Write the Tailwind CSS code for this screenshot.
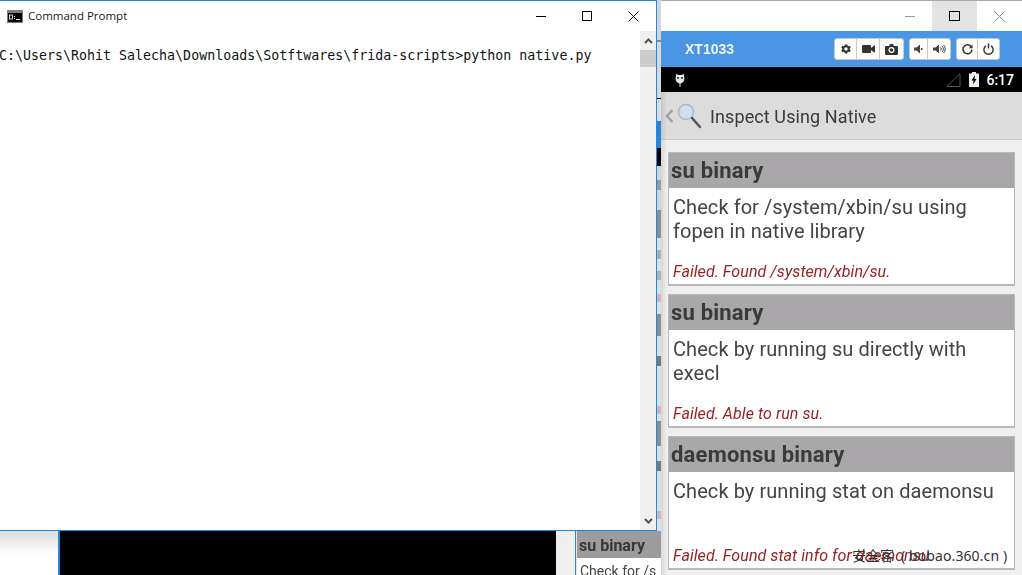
<!DOCTYPE html>
<html lang="en">
<head>
  <meta charset="UTF-8" />
  <title>Command Prompt</title>
  <script src="https://cdn.jsdelivr.net/npm/@tailwindcss/browser@4"></script>
</head>
<body class="bg-white overflow-hidden">
  <div class="relative w-[1022px] h-[575px] overflow-hidden font-['Roboto',sans-serif]">

    <!-- strip of the back window between cmd and emulator -->
    <div class="absolute left-[657px] top-0 w-[4px] h-[531px] flex flex-col bg-[#d6d6d6] blur-[0.3px]">
      <div class="h-[40px] bg-[#d4d4d4]"></div>
      <div class="h-[2px] bg-[#8a8a8a]"></div>
      <div class="h-[56px] bg-[#d8d8d8]"></div>
      <div class="h-[1px] bg-black"></div>
      <div class="h-[22px] bg-[#dcdcdc]"></div>
      <div class="h-[27px] bg-[#2f80d0]"></div>
      <div class="h-[18px] bg-black"></div>
      <div class="h-[14px] bg-[#d4d4d4]"></div>
      <div class="h-[10px] bg-[#9a9a9a]"></div>
      <div class="h-[20px] bg-[#d4d4d4]"></div>
      <div class="h-[28px] bg-[#8f8d8f]"></div>
      <div class="h-[12px] bg-[#dedede]"></div>
      <div class="h-[9px] bg-[#b0b0b0]"></div>
      <div class="h-[12px] bg-[#dedede]"></div>
      <div class="h-[9px] bg-[#b0b0b0]"></div>
      <div class="h-[14px] bg-[#dedede]"></div>
      <div class="h-[8px] bg-[#d8b4b4]"></div>
      <div class="h-[12px] bg-[#dedede]"></div>
      <div class="h-[22px] bg-[#8f8d8f]"></div>
      <div class="h-[20px] bg-[#dedede]"></div>
      <div class="h-[10px] bg-[#777]"></div>
      <div class="h-[40px] bg-[#dedede]"></div>
      <div class="h-[8px] bg-[#d8b4b4]"></div>
      <div class="h-[7px] bg-[#dedede]"></div>
      <div class="h-[25px] bg-[#8f8d8f]"></div>
      <div class="h-[15px] bg-[#dedede]"></div>
      <div class="h-[10px] bg-[#777]"></div>
      <div class="h-[40px] bg-[#dedede]"></div>
      <div class="h-[8px] bg-[#d8b4b4]"></div>
      <div class="flex-1 bg-[#dedede]"></div>
    </div>

    <!-- window behind: black pane and the bit of the app peeking out -->
    <div class="absolute left-[58px] top-[531px] w-[2px] h-[44px] bg-[#1e88e5]"></div>
    <div class="absolute left-[60px] top-[531px] w-[496px] h-[44px] bg-black"></div>
    <div class="absolute left-[556px] top-[531px] w-[20px] h-[44px] bg-[#efefef]"></div>
    <div class="absolute left-[575px] top-[531px] w-[1px] h-[44px] bg-[#2a8ae0]"></div>
    <div class="absolute left-[576px] top-[531px] w-[85px] h-[44px] bg-[#e4e4e4] flex flex-col">
      <div class="ml-px h-[27px] bg-[#9d9b9d] pl-[2px] text-[16px] leading-[30px] font-bold text-[#383838] blur-[0.4px] whitespace-nowrap overflow-hidden">su binary</div>
      <div class="ml-px h-[17px] bg-white pl-[3px] text-[14px] leading-[27px] text-[#444] blur-[0.4px] whitespace-nowrap overflow-hidden">Check for /s</div>
    </div>

    <!-- emulator window -->
    <div class="absolute left-[661px] top-0 w-[361px] h-[575px] flex flex-col bg-[#efefef] border-t border-[#a8a8a8]">
      <div class="h-[30px] bg-white flex justify-end shrink-0">
        <div class="w-[45px] flex items-center justify-center">
          <div class="w-[10px] h-px bg-[#9a9a9a]"></div>
        </div>
        <div class="w-[45px] flex items-center justify-center bg-[#e3e3e3]">
          <div class="w-[11px] h-[10px] border border-black"></div>
        </div>
        <div class="w-[45px] flex items-center justify-center">
          <svg width="11" height="11" viewBox="0 0 11 11" stroke="#8a8a8a" fill="none"><path d="M.5.5l10 10M10.5.5l-10 10"/></svg>
        </div>
      </div>

      <!-- toolbar -->
      <div class="h-[36px] bg-[#4a95e4] flex items-center shrink-0 pl-[24px] font-['Liberation_Sans',sans-serif]">
        <span class="w-[149px] text-white text-[14px] font-bold opacity-90">XT1033</span>
        <div class="flex h-[22px] bg-white rounded-[3px] border border-[#c8c8c8] divide-x divide-[#c8c8c8]">
          <div class="w-[22px] flex items-center justify-center">
            <svg width="12" height="12" viewBox="0 0 24 24" fill="#333"><path d="M19.4 13a7.500 7.500 0 0 0 0-2l2.200-1.700-2.200-3.700-2.600 1a7.500 7.500 0 0 0-1.700-1L14.500 2.800h-5L9 5.600a7.500 7.500 0 0 0-1.700 1l-2.600-1-2.200 3.700L4.700 11a7.500 7.500 0 0 0 0 2l-2.200 1.700 2.200 3.700 2.600-1a7.500 7.500 0 0 0 1.700 1l.5 2.800h5l.6-2.800a7.500 7.500 0 0 0 1.700-1l2.600 1 2.200-3.700zM12 15.500a3.500 3.500 0 1 1 0-7 3.500 3.500 0 0 1 0 7z"/></svg>
          </div>
          <div class="w-[23px] flex items-center justify-center">
            <svg width="13" height="10" viewBox="0 0 13 10" fill="#333"><rect x="0" y="1" width="9" height="8" rx="1"/><path d="M9 4l4-3v8L9 6z"/></svg>
          </div>
          <div class="w-[23px] flex items-center justify-center">
            <svg width="13" height="11" viewBox="0 0 13 11" fill="#333"><path fill-rule="evenodd" d="M1 2h3l1-2h3l1 2h3a1 1 0 0 1 1 1v7a1 1 0 0 1-1 1H1a1 1 0 0 1-1-1V3a1 1 0 0 1 1-1zm5.500 7a3 3 0 1 0 0-6 3 3 0 0 0 0 6zm0-1.300a1.700 1.700 0 1 1 0-3.400 1.700 1.700 0 0 1 0 3.400z"/></svg>
          </div>
        </div>
        <div class="ml-[5px] flex h-[22px] bg-white rounded-[3px] border border-[#c8c8c8] divide-x divide-[#c8c8c8]">
          <div class="w-[18px] flex items-center justify-center">
            <svg width="9" height="10" viewBox="0 0 9 10" fill="#444"><path d="M0 3.500h2.500L6 .5v9L2.500 6.500H0z"/><path d="M7 4h1.500v2H7z"/></svg>
          </div>
          <div class="w-[22px] flex items-center justify-center">
            <svg width="13" height="10" viewBox="0 0 13 10" fill="#444"><path d="M0 3.500h2.500L6 .5v9L2.500 6.500H0z"/><path d="M7.500 3.500a2 2 0 0 1 0 3M9 2a4 4 0 0 1 0 6M10.500 .8a6 6 0 0 1 0 8.400" fill="none" stroke="#444"/></svg>
          </div>
        </div>
        <div class="ml-[5px] flex h-[22px] bg-white rounded-[3px] border border-[#c8c8c8] divide-x divide-[#c8c8c8]">
          <div class="w-[21px] flex items-center justify-center">
            <svg width="11" height="11" viewBox="0 0 11 11" fill="none" stroke="#333" stroke-width="1.500"><path d="M9.500 3.200A4.500 4.500 0 1 0 10 5.500"/><path d="M10.500 .5v3.700H6.800z" fill="#333" stroke="none"/></svg>
          </div>
          <div class="w-[21px] flex items-center justify-center">
            <svg width="11" height="12" viewBox="0 0 11 12" fill="none" stroke="#333" stroke-width="1.400"><path d="M3 2.800a4.600 4.600 0 1 0 5 0M5.500 .5v5"/></svg>
          </div>
        </div>
      </div>

      <!-- android status bar -->
      <div class="h-[25px] bg-black flex items-center shrink-0 pl-[13px] pr-[8px] text-white">
        <svg width="12" height="16" viewBox="0 0 12 16" fill="#e8e8e8"><path d="M2.500 1.500L4 3h4l1.500-1.500L10 4c1.200 3.500-.5 7-3.500 7.500V15h-1v-3.500C2.500 11 .8 7.500 2 4z"/><circle cx="4" cy="6" r="1" fill="#222"/><circle cx="8" cy="6" r="1" fill="#222"/></svg>
        <div class="flex-1"></div>
        <svg width="15" height="14" viewBox="0 0 15 14" fill="none" stroke="#555"><path d="M14 .8V13.500H.8z"/></svg>
        <svg class="ml-[8px]" width="10" height="15" viewBox="0 0 10 15" fill="#eee"><path fill-rule="evenodd" d="M3 0h4v1.500h3V15H0V1.500h3zM6 3L2.500 8.500h2L4 12.500l3.500-5.500h-2z"/></svg>
        <span class="ml-[7px] text-[14px] font-medium leading-none">6:17</span>
      </div>

      <!-- action bar -->
      <div class="h-[48px] bg-[#dcdcdc] border-b border-[#cfcfcf] flex items-center shrink-0 pl-[4px] blur-[0.3px]">
        <svg width="9" height="14" viewBox="0 0 9 14" fill="none" stroke="#a3a3a3" stroke-width="2.500"><path d="M7.500 1L2 7l5.500 6"/></svg>
        <svg class="ml-[2px]" width="26" height="28" viewBox="0 0 26 28" fill="none"><circle cx="10" cy="10" r="7.500" fill="#cfe0ec" stroke="#a9bcc9" stroke-width="1.500"/><path d="M16 16l8 9" stroke="#555" stroke-width="2.500" stroke-linecap="round"/></svg>
        <span class="ml-[8px] mt-[2px] text-[18px] text-[#3a3a3a] tracking-[0.1px]">Inspect Using Native</span>
      </div>

      <!-- cards -->
      <div class="px-[7px] pt-[12px] flex flex-col gap-[8px] blur-[0.3px]">
        <div class="h-[134px] bg-white border border-[#b8b8b8] border-b-2 flex flex-col">
          <div class="h-[35px] bg-[#a9a7a9] pl-[2px] text-[22px] tracking-[0.2px] leading-[35px] font-bold text-[#3a3a3a]">su binary</div>
          <div class="flex-1 px-[4px] pt-[7px] text-[20px] leading-[24px] text-[#444] tracking-[0.07px]">Check for /system/xbin/su using<br />fopen in native library</div>
          <div class="px-[4px] text-[16px] tracking-[0.07px] italic text-[#9b2020]">Failed. Found /system/xbin/su.</div>
        </div>
        <div class="h-[134px] bg-white border border-[#b8b8b8] border-b-2 flex flex-col">
          <div class="h-[35px] bg-[#a9a7a9] pl-[2px] text-[22px] tracking-[0.2px] leading-[35px] font-bold text-[#3a3a3a]">su binary</div>
          <div class="flex-1 px-[4px] pt-[7px] text-[20px] leading-[24px] text-[#444] tracking-[0.07px]">Check by running su directly with<br />execl</div>
          <div class="px-[4px] text-[16px] tracking-[0.07px] italic text-[#9b2020]">Failed. Able to run su.</div>
        </div>
        <div class="h-[134px] bg-white border border-[#b8b8b8] border-b-2 flex flex-col">
          <div class="h-[35px] bg-[#a9a7a9] pl-[2px] text-[22px] tracking-[0.2px] leading-[35px] font-bold text-[#3a3a3a]">daemonsu binary</div>
          <div class="flex-1 px-[4px] pt-[7px] text-[20px] leading-[24px] text-[#444] tracking-[0.07px]">Check by running stat on daemonsu</div>
          <div class="px-[4px] text-[16px] tracking-[0.07px] italic text-[#9b2020]">Failed. Found stat info for daemonsu.</div>
        </div>
      </div>
    </div>

    <!-- shadow under cmd -->
    <div class="absolute left-0 top-[531px] w-[58px] h-[24px] bg-gradient-to-b from-[#dcdcdc] to-white"></div>
    <div class="absolute left-[661px] top-[92px] w-[6px] h-[483px] bg-gradient-to-r from-black/10 to-transparent"></div>

    <!-- cmd window -->
    <div class="absolute left-0 top-0 w-[657px] h-[531px] bg-white border-t border-r border-b border-[#1e88e5] flex flex-col">
      <div class="h-[30px] flex items-center shrink-0 pl-[7px] font-['Open_Sans',sans-serif]">
        <svg width="16" height="13" viewBox="0 0 16 13"><rect width="16" height="13" fill="#7d7d7d"/><rect x="1" y="3" width="14" height="9" fill="#000"/><rect x="2.500" y="5" width="3" height="4" fill="none" stroke="#fff" stroke-width=".8"/><path d="M7 6h1v1H7zM7 8h1v1H7zM9 9h4v1H9z" fill="#fff"/></svg>
        <span class="ml-[5px] text-[11.500px] text-[#1a1a1a]">Command Prompt</span>
        <div class="flex-1"></div>
        <div class="flex h-[30px]">
          <div class="w-[46px] flex items-center justify-center"><div class="w-[10px] h-px bg-black"></div></div>
          <div class="w-[46px] flex items-center justify-center"><div class="w-[10px] h-[10px] border border-black"></div></div>
          <div class="w-[46px] flex items-center justify-center">
            <svg width="11" height="11" viewBox="0 0 11 11" stroke="#111" fill="none"><path d="M.5.5l10 10M10.500.5l-10 10"/></svg>
          </div>
        </div>
      </div>
      <div class="flex-1 flex min-h-0">
        <div class="flex-1 pt-[16px] -ml-px font-['DejaVu_Sans_Mono',monospace] text-[13.300px] leading-[18px] text-[#111] whitespace-pre">C:\Users\Rohit Salecha\Downloads\Sotftwares\frida-scripts&gt;python native.py</div>
        <div class="w-[16px] bg-[#f0f0f0] flex flex-col">
          <div class="h-[19px] flex items-center justify-center">
            <svg width="9" height="6" viewBox="0 0 9 6" fill="none" stroke="#555" stroke-width="2"><path d="M1 5l3.500-3.500L8 5"/></svg>
          </div>
          <div class="h-[17px] bg-[#cdcdcd]"></div>
          <div class="flex-1"></div>
          <div class="h-[19px] flex items-center justify-center">
            <svg width="9" height="6" viewBox="0 0 9 6" fill="none" stroke="#555" stroke-width="2"><path d="M1 1l3.500 3.500L8 1"/></svg>
          </div>
        </div>
      </div>
    </div>

    <!-- watermark -->
    <div class="absolute left-[852px] top-[546px] flex items-center gap-[7px] text-[14px] leading-[20px] text-[#333] whitespace-nowrap font-['Noto_Sans','Noto_Sans_CJK_SC',sans-serif]">
      <span>安全客</span><span class="tracking-[0.1px]">( bobao.360.cn )</span>
    </div>
  </div>
</body>
</html>
